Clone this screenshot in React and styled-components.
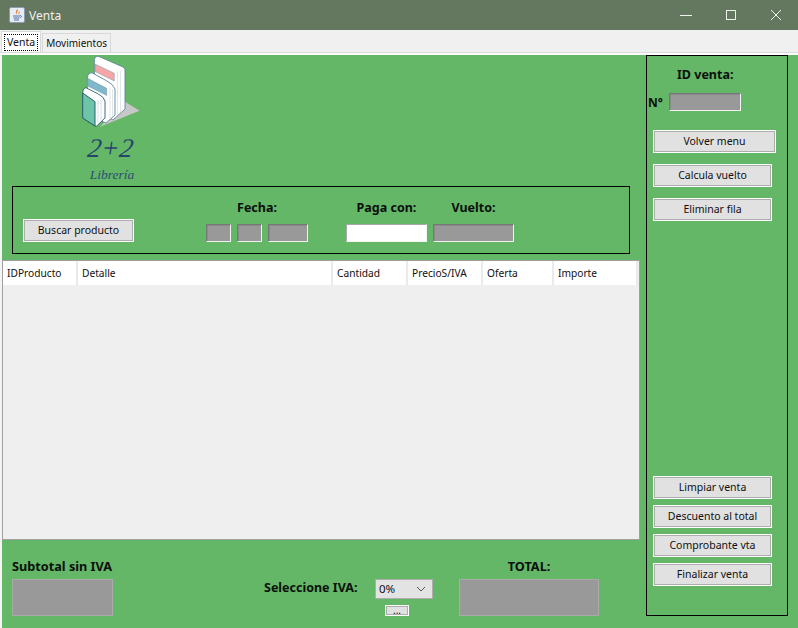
import React from "react";
import styled, { createGlobalStyle } from "styled-components";

const GlobalStyle = createGlobalStyle`
  html, body {
    margin: 0;
    padding: 0;
    background: #f0f0f0;
  }
  * {
    box-sizing: border-box;
  }
`;

const Window = styled.div`
  width: 798px;
  height: 628px;
  display: flex;
  flex-direction: column;
  overflow: hidden;
  font-family: "Noto Sans", "Liberation Sans", sans-serif;
  font-size: 10.5px;
  color: #101010;
`;

const TitleBar = styled.div`
  height: 30px;
  flex: none;
  display: flex;
  align-items: center;
  padding-left: 9px;
  background: #647860;
  color: #f0f0f0;
  font-size: 12px;
`;

const TitleText = styled.span`
  margin-left: 4px;
`;

const WindowControls = styled.div`
  margin-left: auto;
  display: flex;
  height: 100%;
`;

const ControlButton = styled.div`
  width: 45px;
  height: 100%;
  display: flex;
  align-items: center;
  justify-content: center;
`;

const TabStrip = styled.div`
  height: 23px;
  flex: none;
  display: flex;
  align-items: flex-end;
  padding-left: 1px;
  background: #f0f0f0;
  border-bottom: 1px solid #d9d9d9;
`;

const Tab = styled.div`
  height: ${(props) => (props.$active ? "21px" : "19px")};
  margin-left: ${(props) => (props.$active ? "0" : "1px")};
  padding: ${(props) => (props.$active ? "2px" : "0 3px 1px")};
  display: flex;
  align-items: center;
  background: ${(props) => (props.$active ? "#fff" : "#f0f0f0")};
  border: 1px solid #d9d9d9;
  border-bottom: none;
  font-size: ${(props) => (props.$active ? "10.5px" : "10px")};
`;

const TabLabel = styled.span`
  padding: ${(props) => (props.$active ? "0 2px 1px" : "0")};
  line-height: 14px;
  border: ${(props) => (props.$active ? "1px dotted #000" : "none")};
`;

const WhiteRule = styled.div`
  height: 2px;
  flex: none;
  background: #fff;
`;

const Content = styled.div`
  flex: 1;
  min-height: 0;
  display: flex;
  border-left: 2px solid #f4f4f4;
  background: #63b767;
`;

const MainColumn = styled.div`
  width: 638px;
  flex: none;
  display: flex;
  flex-direction: column;
`;

const LogoBlock = styled.div`
  height: 131px;
  flex: none;
  width: 62px;
  margin-left: 78px;
  display: flex;
  flex-direction: column;
  align-items: center;
`;

const LogoTitle = styled.div`
  margin-top: 4px;
  height: 26px;
  font-family: "Liberation Serif", serif;
  font-style: italic;
  font-size: 27px;
  line-height: 26px;
  color: #26456e;
  transform: skewX(-8deg);
`;

const LogoSubtitle = styled.div`
  margin-top: 6px;
  font-family: "Liberation Serif", serif;
  font-style: italic;
  font-size: 13.5px;
  line-height: 16px;
  color: #2f4d78;
  transform: translateX(1px);
`;

const SearchBox = styled.div`
  width: 618px;
  height: 68px;
  flex: none;
  margin-left: 10px;
  padding: 0 0 11px 10px;
  display: flex;
  align-items: flex-end;
  border: 1px solid #000;
`;

const Button = styled.div`
  height: 23px;
  width: ${(props) => props.$width || 119}px;
  padding-bottom: 1px;
  display: flex;
  align-items: center;
  justify-content: center;
  background: #e1e1e1;
  border: 1px solid #fff;
  box-shadow: inset 0 0 0 1px #adadad;
  color: #101010;
`;

const FieldGroup = styled.div`
  margin-left: ${(props) => props.$gap}px;
  width: ${(props) => props.$width}px;
  display: flex;
  flex-direction: column;
  align-items: center;
`;

const FieldLabel = styled.div`
  height: 17px;
  margin-bottom: 8px;
  font-size: 12.5px;
  line-height: 17px;
  font-weight: 700;
  color: #0b0f0b;
  white-space: nowrap;
`;

const DateRow = styled.div`
  display: flex;
  gap: 6px;
`;

const GrayField = styled.div`
  width: ${(props) => props.$width}px;
  height: 18px;
  background: #999;
  border-style: solid;
  border-width: 1px;
  border-color: #777 #f2f2f2 #f2f2f2 #777;
  box-shadow: inset 1px 1px 0 #8a8a8a;
`;

const WhiteField = styled.div`
  width: 81px;
  height: 18px;
  background: #fff;
  border: 1px solid #a8a8a8;
  border-color: #a8a8a8 #f2f2f2 #f2f2f2 #a8a8a8;
`;

const Table = styled.div`
  width: 638px;
  height: 280px;
  flex: none;
  margin-top: 6px;
  background: #efefef;
  border: 1px solid #a0a0a0;
`;

const HeaderRow = styled.div`
  display: grid;
  grid-template-columns: 75px 255px 75px 75px 71px 84px;
  height: 24px;
`;

const HeaderCell = styled.div`
  padding-left: 4px;
  display: flex;
  align-items: center;
  background: #fff;
  border-right: 2px solid #eaeaea;
  font-size: 10.2px;
`;

const Footer = styled.div`
  flex: 1;
  display: flex;
  padding: 18px 0 0 10px;
`;

const TotalGroup = styled.div`
  width: ${(props) => props.$width}px;
  margin-left: ${(props) => props.$gap || 0}px;
  display: flex;
  flex-direction: column;
`;

const TotalLabel = styled.div`
  height: 16px;
  margin-bottom: 5px;
  font-size: 12.7px;
  line-height: 16px;
  font-weight: 700;
  color: #0b0f0b;
  white-space: nowrap;
  text-align: ${(props) => (props.$centered ? "center" : "left")};
`;

const TotalBox = styled.div`
  height: 37px;
  background: #999;
  border: 1px solid #aaa;
`;

const IvaGroup = styled.div`
  margin-left: 151px;
  display: flex;
  padding-top: 21px;
`;

const IvaLabel = styled.div`
  width: 111px;
  font-size: 12.5px;
  line-height: 17px;
  font-weight: 700;
  color: #0b0f0b;
  white-space: nowrap;
`;

const IvaControls = styled.div`
  display: flex;
  flex-direction: column;
`;

const IvaSelect = styled.div`
  width: 58px;
  height: 20px;
  padding: 0 6px 1px 3px;
  display: flex;
  align-items: center;
  justify-content: space-between;
  background: #e3e3e3;
  border: 1px solid #adadad;
  font-size: 11.5px;
`;

const MoreButton = styled.div`
  width: 24px;
  height: 11px;
  margin: 6px 0 0 10px;
  display: flex;
  align-items: flex-end;
  justify-content: center;
  background: #e1e1e1;
  border: 1px solid #fff;
  box-shadow: inset 0 0 0 1px #adadad;
  font-size: 10px;
  line-height: 9px;
`;

const SidePanel = styled.div`
  width: 142px;
  height: 561px;
  flex: none;
  margin-left: 6px;
  padding: 0 0 29px 6px;
  display: flex;
  flex-direction: column;
  border: 1px solid #000;
`;

const PanelTitle = styled.div`
  margin-top: 10px;
  padding-left: 24px;
  font-size: 12.5px;
  line-height: 17px;
  font-weight: 700;
  color: #0b0f0b;
`;

const IdRow = styled.div`
  margin: 10px 0 0 -5px;
  display: flex;
  align-items: center;
`;

const IdMark = styled.span`
  width: 21px;
  font-size: 12px;
  font-weight: 700;
  color: #0b0f0b;
`;

const ButtonStack = styled.div`
  display: flex;
  flex-direction: column;
  gap: ${(props) => props.$gap}px;
  margin-top: ${(props) => props.$top};
`;

const columns = ["IDProducto", "Detalle", "Cantidad", "PrecioS/IVA", "Oferta", "Importe"];

const JavaIcon = () => (
  <svg width="16" height="16" viewBox="0 0 16 16">
    <rect x="0.5" y="0.5" width="15" height="15" rx="1.5" fill="#e8edf5" stroke="#8d9bb0" />
    <path d="M8.5 2 C10 4 6.5 5 8 7.5 C6 6 7 4 8.5 2 Z" fill="#e8681a" />
    <path d="M10.5 4 C9.5 5 9 6 9.5 7.5 C11 6.5 11 5.5 10.5 4 Z" fill="#f09a3c" />
    <path d="M4 9 H11 M4.5 11 H10.5 M5 13 H10 M11 8.5 C13 8.5 13 10.5 11 10.5" fill="none" stroke="#4a6fa5" strokeWidth="1" />
  </svg>
);

const BooksLogo = () => (
  <svg width="62" height="76" viewBox="0 0 62 76">
    <polygon points="45,46.7 59.5,55.7 20,71.7" fill="#c8c8c8" />
    <path d="M14.3 5 Q15 .5 19 1.5 L43 12 Q45 13 45 15 L45 54 L33 65 L14.3 55 Z" fill="#fff" stroke="#5f8795" strokeWidth="0.9" />
    <path d="M15 9 L34.3 18.3 L34.3 26 L15 16.5 Z" fill="#f4a6a9" stroke="#5f8795" strokeWidth="0.4" />
    <path d="M37.5 17 V60 M40.5 16 V57" fill="none" stroke="#d3dde3" strokeWidth="0.7" />
    <path d="M7.3 23 Q8 17.5 12 17.8 L27 26 Q33 29 35 34 V60 L26 68 L7.3 60 Z" fill="#fff" stroke="#5f8795" strokeWidth="0.9" />
    <path d="M7.7 23.3 L26.7 33.3 L26.7 40.5 L7.7 31 Z" fill="#7fb8cb" stroke="#5f8795" strokeWidth="0.4" />
    <path d="M30 32 V64 M32.5 34 V62" fill="none" stroke="#d3dde3" strokeWidth="0.7" />
    <path d="M2.7 38 Q3 33 6 32.7 L18.3 39 Q24 42 25 46 V63 L16.7 71 L15 71 L2.7 63 Z" fill="#fff" stroke="#2f5f70" strokeWidth="0.9" />
    <path d="M2.7 38 L15 46.7 V71 L2.7 63 Z" fill="#6dc5a7" stroke="#2f5f70" strokeWidth="1" />
    <path d="M18 45 V68 M21 44 V66" fill="none" stroke="#c3d2d9" strokeWidth="0.7" />
  </svg>
);

const Chevron = () => (
  <svg width="10" height="6" viewBox="0 0 10 6">
    <path d="M1 1 L5 5 L9 1" fill="none" stroke="#555" strokeWidth="1" />
  </svg>
);

function App() {
  return (
    <Window>
      <GlobalStyle />
      <TitleBar>
        <JavaIcon />
        <TitleText>Venta</TitleText>
        <WindowControls>
          <ControlButton>
            <svg width="12" height="12" viewBox="0 0 12 12">
              <path d="M0 6.5 H12" stroke="#f0f0f0" strokeWidth="1" />
            </svg>
          </ControlButton>
          <ControlButton>
            <svg width="12" height="12" viewBox="0 0 12 12">
              <rect x="1.5" y="1.5" width="9" height="9" fill="none" stroke="#f0f0f0" strokeWidth="1" />
            </svg>
          </ControlButton>
          <ControlButton>
            <svg width="12" height="12" viewBox="0 0 12 12">
              <path d="M1 1 L11 11 M11 1 L1 11" stroke="#f0f0f0" strokeWidth="1" />
            </svg>
          </ControlButton>
        </WindowControls>
      </TitleBar>
      <TabStrip>
        <Tab $active>
          <TabLabel $active>Venta</TabLabel>
        </Tab>
        <Tab>
          <TabLabel>Movimientos</TabLabel>
        </Tab>
      </TabStrip>
      <WhiteRule />
      <Content>
        <MainColumn>
          <LogoBlock>
            <BooksLogo />
            <LogoTitle>2+2</LogoTitle>
            <LogoSubtitle>Librería</LogoSubtitle>
          </LogoBlock>
          <SearchBox>
            <Button $width={111}>Buscar producto</Button>
            <FieldGroup $gap={72} $width={102}>
              <FieldLabel>Fecha:</FieldLabel>
              <DateRow>
                <GrayField $width={25} />
                <GrayField $width={25} />
                <GrayField $width={40} />
              </DateRow>
            </FieldGroup>
            <FieldGroup $gap={38} $width={81}>
              <FieldLabel>Paga con:</FieldLabel>
              <WhiteField />
            </FieldGroup>
            <FieldGroup $gap={6} $width={81}>
              <FieldLabel>Vuelto:</FieldLabel>
              <GrayField $width={81} />
            </FieldGroup>
          </SearchBox>
          <Table>
            <HeaderRow>
              {columns.map((column) => (
                <HeaderCell key={column}>{column}</HeaderCell>
              ))}
            </HeaderRow>
          </Table>
          <Footer>
            <TotalGroup $width={101}>
              <TotalLabel>Subtotal sin IVA</TotalLabel>
              <TotalBox />
            </TotalGroup>
            <IvaGroup>
              <IvaLabel>Seleccione IVA:</IvaLabel>
              <IvaControls>
                <IvaSelect>
                  0%
                  <Chevron />
                </IvaSelect>
                <MoreButton>...</MoreButton>
              </IvaControls>
            </IvaGroup>
            <TotalGroup $width={140} $gap={26}>
              <TotalLabel $centered>TOTAL:</TotalLabel>
              <TotalBox />
            </TotalGroup>
          </Footer>
        </MainColumn>
        <SidePanel>
          <PanelTitle>ID venta:</PanelTitle>
          <IdRow>
            <IdMark>N°</IdMark>
            <GrayField $width={72} />
          </IdRow>
          <ButtonStack $gap={11} $top="19px">
            <Button $width={123}>Volver menu</Button>
            <Button>Calcula vuelto</Button>
            <Button>Eliminar fila</Button>
          </ButtonStack>
          <ButtonStack $gap={6} $top="auto">
            <Button>Limpiar venta</Button>
            <Button>Descuento al total</Button>
            <Button>Comprobante vta</Button>
            <Button>Finalizar venta</Button>
          </ButtonStack>
        </SidePanel>
      </Content>
    </Window>
  );
}

export default App;
